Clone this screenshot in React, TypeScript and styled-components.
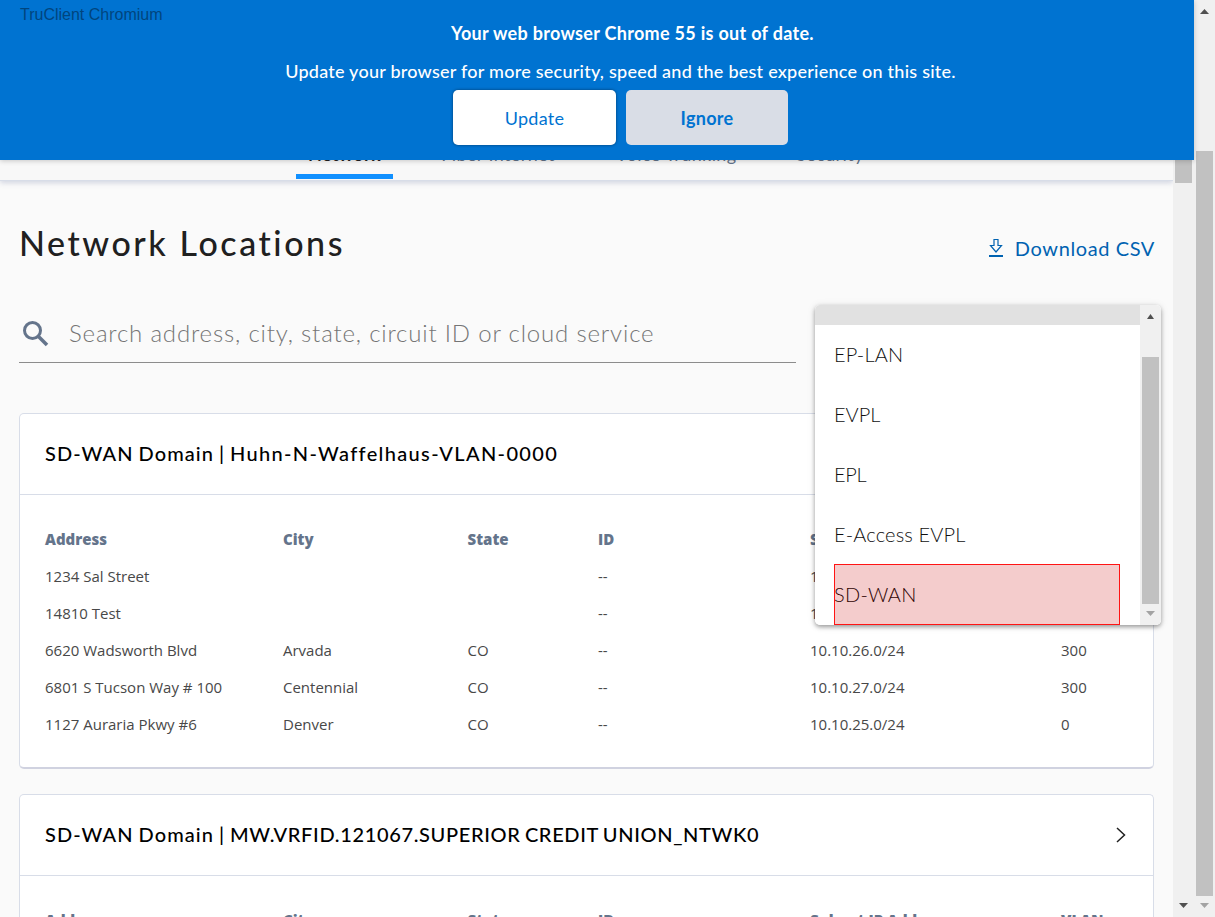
import React from "react";
import styled, { createGlobalStyle } from "styled-components";

const Global = createGlobalStyle`
  * { box-sizing: border-box; }
  html, body { margin: 0; padding: 0; overflow: hidden; }
  body { background: #fafafa; font-family: Lato, "Liberation Sans", sans-serif; }
  h1, h2, p { margin: 0; }
`;

const Window = styled.div`
  position: relative;
  display: grid;
  grid-template-columns: 1173px 21px 21px;
  width: 1215px;
  height: 917px;
  overflow: hidden;
`;

const Page = styled.main`
  height: 917px;
  overflow: hidden;
  background: #fafafa;
`;

const TabBar = styled.nav`
  display: flex;
  align-items: flex-end;
  gap: 32px;
  height: 181px;
  padding: 0 0 1px 296px;
  background: #f8f8f8;
  border-bottom: 1px solid #d8dde8;
  box-shadow: 0 2px 5px rgba(120, 130, 170, 0.3);
`;

const Tab = styled.a<{ $active?: boolean; $width: number; $spacing: number }>`
  width: ${(p) => p.$width}px;
  height: 46px;
  padding-top: 10px;
  text-align: center;
  white-space: nowrap;
  font-size: 18px;
  line-height: 22px;
  font-weight: ${(p) => (p.$active ? 700 : 400)};
  letter-spacing: ${(p) => p.$spacing}px;
  color: ${(p) => (p.$active ? "#202020" : "#64748b")};
  border-bottom: 5px solid ${(p) => (p.$active ? "#1190ff" : "transparent")};
`;

const Content = styled.div`
  padding: 0 19px;
`;

const TitleRow = styled.header`
  display: flex;
  justify-content: space-between;
  height: 124px;
  padding-top: 42px;
`;

const PageTitle = styled.h1`
  font-size: 34px;
  line-height: 40px;
  font-weight: 500;
  letter-spacing: 2.55px;
  color: #202020;
`;

const DownloadLink = styled.a`
  display: flex;
  align-items: flex-start;
  margin-right: -1px;
  padding-top: 12px;
  color: #0062b1;
  font-size: 20px;
  line-height: 26px;
  letter-spacing: 0.6px;

  svg { margin: 3px 11px 0 0; }
`;

const SearchField = styled.div`
  display: flex;
  align-items: center;
  width: 777px;
  height: 58px;
  border-bottom: 1px solid #8c8c8c;
  color: #757575;
  font-size: 24px;
  font-weight: 300;
  letter-spacing: 0.82px;

  svg { margin: 0 20px 0 3px; }
`;

const Placeholder = styled.span`
  padding-bottom: 2px;
`;

const CardList = styled.div`
  display: flex;
  flex-direction: column;
  gap: 25px;
  padding-top: 50px;
`;

const Card = styled.section`
  height: 356px;
  flex: none;
  background: #fff;
  border: 1px solid #d8dde8;
  border-bottom: 2px solid #d0d2e0;
  border-radius: 5px;
`;

const CardHeader = styled.div`
  display: flex;
  align-items: center;
  justify-content: space-between;
  height: 81px;
  padding: 0 26px 0 25px;
  border-bottom: 1px solid #d8dde8;
`;

const CardTitle = styled.h2`
  padding-bottom: 2px;
  font-size: 20px;
  line-height: 26px;
  font-weight: 500;
  letter-spacing: 1.1px;
  word-spacing: -1.3px;
  color: #000;
`;

const DomainName = styled.span<{ $spacing: number }>`
  letter-spacing: ${(p) => p.$spacing}px;
`;

const Table = styled.div`
  display: grid;
  grid-template-columns: 238px 184.5px 130.5px 212px 251px 1fr;
  grid-auto-rows: 37px;
  align-items: center;
  padding: 25px 0 0 25px;
  font-family: "Open Sans", sans-serif;
  font-size: 15px;
`;

const HeadCell = styled.div`
  font-weight: 800;
  color: #64748b;
`;

const Cell = styled.div`
  font-weight: 400;
  color: #484848;
  white-space: nowrap;
`;

const Banner = styled.div`
  position: absolute;
  top: 0;
  left: 0;
  width: 1194px;
  height: 160px;
  padding-left: 47px;
  display: flex;
  flex-direction: column;
  align-items: center;
  background: #0073d1;
  color: #fff;
  box-shadow: 0 1px 5px rgba(0, 0, 0, 0.2);
`;

const BannerTitle = styled.p`
  margin-top: 20px;
  padding-left: 24px;
  font-size: 18px;
  line-height: 26px;
  font-weight: 700;
  letter-spacing: 0.3px;
`;

const BannerText = styled.p`
  margin-top: 12px;
  font-size: 18px;
  line-height: 26px;
  font-weight: 500;
  letter-spacing: 0.24px;
`;

const BannerActions = styled.div`
  display: flex;
  gap: 10px;
  margin-top: 6px;
`;

const BannerButton = styled.button<{ $muted?: boolean }>`
  width: ${(p) => (p.$muted ? 162 : 163)}px;
  height: 55px;
  padding: 1px 0 0;
  border: 0;
  border-radius: 5px;
  background: ${(p) => (p.$muted ? "#d9dde6" : "#fff")};
  box-shadow: ${(p) => (p.$muted ? "none" : "0 0 3px rgba(0, 0, 0, 0.5)")};
  color: #0073d1;
  font-family: Lato, sans-serif;
  font-size: 18px;
  font-weight: ${(p) => (p.$muted ? 700 : 400)};
  letter-spacing: 0.3px;
`;

const ClientLabel = styled.span`
  position: absolute;
  top: 5px;
  left: 20px;
  font-family: "Liberation Sans", Arial, sans-serif;
  font-size: 16px;
  line-height: 20px;
  color: #00457e;
`;

const Menu = styled.div`
  position: absolute;
  top: 305px;
  left: 815px;
  width: 346px;
  height: 320px;
  display: grid;
  grid-template-columns: 1fr 21px;
  overflow: hidden;
  border-radius: 5px;
  background: #fff;
`;

const MenuShadow = styled.div`
  position: absolute;
  top: 305px;
  left: 815px;
  width: 346px;
  height: 320px;
  border-radius: 5px;
  box-shadow: 0 2px 4px rgba(0, 0, 0, 0.35), 0 1px 8px rgba(0, 0, 0, 0.1);
`;

const MenuScroller = styled.div`
  display: flex;
  flex-direction: column;
`;

const HoveredItem = styled.div`
  height: 20px;
  flex: none;
  background: #e1e1e1;
`;

const MenuItem = styled.div<{ $spacing: number; $marked?: boolean }>`
  flex: none;
  height: ${(p) => (p.$marked ? 61 : 60)}px;
  margin: ${(p) => (p.$marked ? "-1px 20px 0 19px" : "0 20px 0 19px")};
  border: ${(p) => (p.$marked ? "1px solid #ff1414" : "0")};
  background: ${(p) => (p.$marked ? "#f4cccc" : "transparent")};
  color: ${(p) => (p.$marked ? "#300505" : "#101010")};
  font-size: 20px;
  line-height: 58px;
  font-weight: 300;
  letter-spacing: ${(p) => p.$spacing}px;
  text-indent: ${(p) => (p.$marked ? "-1px" : "0")};
`;

const Track = styled.div`
  display: flex;
  flex-direction: column;
  align-items: center;
  height: 100%;
  background: #f0f0f0;
`;

const Thumb = styled.div<{ $before: number; $size: number }>`
  flex: none;
  width: 17px;
  height: ${(p) => p.$size}px;
  margin-top: ${(p) => p.$before}px;
  background: #c1c1c1;
`;

const Arrow = styled.svg<{ $before: number }>`
  flex: none;
  display: block;
  margin-top: ${(p) => p.$before}px;
`;

const ScrollArrow = ({ down, before, color, width = 9 }: { down?: boolean; before: number; color: string; width?: number }) => (
  <Arrow $before={before} width={width} height={5} viewBox="0 0 9 5" preserveAspectRatio="none">
    <path d={down ? "M0 0H9L4.5 5Z" : "M0 5H9L4.5 0Z"} fill={color} />
  </Arrow>
);

const columns = ["Address", "City", "State", "ID", "Subnet IP Address", "VLAN"];

const locations = [
  ["1234 Sal Street", "", "", "--", "10.10.28.0/24", "300"],
  ["14810 Test", "", "", "--", "10.10.29.0/24", "300"],
  ["6620 Wadsworth Blvd", "Arvada", "CO", "--", "10.10.26.0/24", "300"],
  ["6801 S Tucson Way # 100", "Centennial", "CO", "--", "10.10.27.0/24", "300"],
  ["1127 Auraria Pkwy #6", "Denver", "CO", "--", "10.10.25.0/24", "0"],
];

const LocationCard = ({ name, spacing, rows }: { name: string; spacing: number; rows: string[][] }) => (
  <Card>
    <CardHeader>
      <CardTitle>
        SD-WAN Domain | <DomainName $spacing={spacing}>{name}</DomainName>
      </CardTitle>
      <svg width="12" height="18" viewBox="0 0 12 18" fill="none">
        <path d="M2 2L9.5 9L2 16" stroke="#202020" strokeWidth="1.5" />
      </svg>
    </CardHeader>
    <Table>
      {columns.map((c) => <HeadCell key={c}>{c}</HeadCell>)}
      {rows.map((row, r) => row.map((value, c) => <Cell key={`${r}-${c}`}>{value}</Cell>))}
    </Table>
  </Card>
);

export default function App() {
  return (
    <>
      <Global />
      <Window>
        <Page>
          <TabBar>
            <Tab $active $width={97} $spacing={0.3}>Network</Tab>
            <Tab $width={146} $spacing={0.4}>Fiber Internet</Tab>
            <Tab $width={146} $spacing={0.4}>Voice Trunking</Tab>
            <Tab $width={98} $spacing={0.4}>Security</Tab>
          </TabBar>
          <Content>
            <TitleRow>
              <PageTitle>Network Locations</PageTitle>
              <DownloadLink>
                <svg width="16" height="20" viewBox="0 0 16 20" fill="none">
                  <path d="M6 1.5H10V7.5H13.5L8 14L2.5 7.5H6Z" stroke="#0062b1" strokeWidth="1.2" />
                  <path d="M1 18H15" stroke="#0062b1" strokeWidth="2" />
                </svg>
                Download CSV
              </DownloadLink>
            </TitleRow>
            <SearchField>
              <svg width="27" height="27" viewBox="0 0 27 27" fill="none">
                <circle cx="10.5" cy="10.5" r="8" stroke="#64748b" strokeWidth="3" />
                <path d="M16 16L25 25" stroke="#64748b" strokeWidth="3.6" />
              </svg>
              <Placeholder>Search address, city, state, circuit ID or cloud service</Placeholder>
            </SearchField>
            <CardList>
              <LocationCard name="Huhn-N-Waffelhaus-VLAN-0000" spacing={1.35} rows={locations} />
              <LocationCard name="MW.VRFID.121067.SUPERIOR CREDIT UNION_NTWK0" spacing={0.65} rows={[]} />
            </CardList>
          </Content>
        </Page>
        <Track>
          <Thumb $before={21} $size={162} />
          <ScrollArrow down before={720} color="#505050" />
        </Track>
        <Track>
          <ScrollArrow before={9} color="#505050" />
          <Thumb $before={137} $size={745} />
          <ScrollArrow down before={7} color="#a3a3a3" />
        </Track>

        <MenuShadow />
        <Menu>
          <MenuScroller>
            <HoveredItem />
            <MenuItem $spacing={0.2}>EP-LAN</MenuItem>
            <MenuItem $spacing={0}>EVPL</MenuItem>
            <MenuItem $spacing={-0.3}>EPL</MenuItem>
            <MenuItem $spacing={0.15}>E-Access EVPL</MenuItem>
            <MenuItem $spacing={0.3} $marked>SD-WAN</MenuItem>
          </MenuScroller>
          <Track>
            <ScrollArrow before={9} color="#505050" width={7} />
            <Thumb $before={38} $size={247} />
            <ScrollArrow down before={7} color="#a3a3a3" />
          </Track>
        </Menu>

        <Banner>
          <ClientLabel>TruClient Chromium</ClientLabel>
          <BannerTitle>Your web browser Chrome 55 is out of date.</BannerTitle>
          <BannerText>Update your browser for more security, speed and the best experience on this site.</BannerText>
          <BannerActions>
            <BannerButton>Update</BannerButton>
            <BannerButton $muted>Ignore</BannerButton>
          </BannerActions>
        </Banner>
      </Window>
    </>
  );
}
